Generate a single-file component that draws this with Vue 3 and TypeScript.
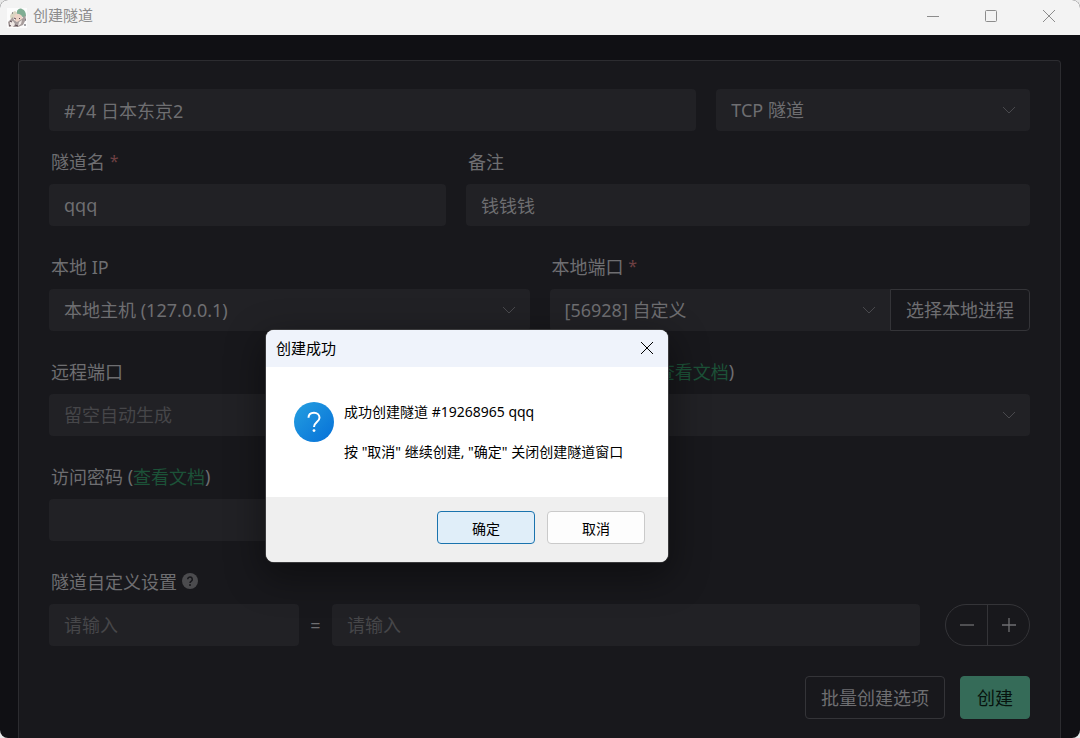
<script setup lang="ts">
import { ref } from 'vue'

const node = ref('#74 日本东京2')
const tunnelName = ref('qqq')
const note = ref('钱钱钱')
const remotePort = ref('')
const password = ref('')
const settingKey = ref('')
const settingValue = ref('')
const dialogOpen = ref(true)
</script>

<template>
  <div class="window">
    <header class="titlebar">
      <svg class="app-icon" viewBox="0 0 20 20" aria-hidden="true">
        <rect width="20" height="20" fill="#fcfcfc" />
        <path d="M3 8C4 5 6 4 8 3l3 2-3 4-4 3z" fill="#d9d5c2" />
        <path d="M10 3c1-2 3-3 5-2 3 1 4 4 4 7l-2 2-3-2-4-1z" fill="#7fae93" />
        <path d="M7 8c2-3 5-3 8 0l1 4-4 3-4-2z" fill="#ecd3c6" />
        <path d="M1 14l5-5 1 3 3 2 5-3 3-4 1 4-3 6-5 2H2z" fill="#a79d9c" />
        <path d="M3 14l3-1 2 3-2 3H3zM12 14l3-2-1 4-3 2z" fill="#efe8e4" />
        <path d="M7 10l2 1M12 10l1 1M3 13l2 1M2 17l2 1M8 17l3 1" stroke="#5b4a52" fill="none" />
        <path d="M17 17h2M5 5h1M18 12h1" stroke="#4c4c54" fill="none" />
      </svg>
      <span class="title">创建隧道</span>
      <div class="controls">
        <button type="button" aria-label="最小化">
          <svg viewBox="0 0 14 14"><path d="M1 7.5h12" /></svg>
        </button>
        <button type="button" aria-label="最大化">
          <svg viewBox="0 0 14 14"><rect x="1.5" y="1.5" width="11" height="11" rx="1" /></svg>
        </button>
        <button type="button" aria-label="关闭">
          <svg viewBox="0 0 14 14"><path d="M1 1l12 12M13 1L1 13" /></svg>
        </button>
      </div>
    </header>

    <main class="page">
      <form class="card" @submit.prevent>
        <div class="row first">
          <input v-model="node" class="field span-16" aria-label="节点" />
          <div class="select span-8">
            <select class="field" aria-label="隧道类型"><option>TCP 隧道</option></select>
            <svg class="chevron" viewBox="0 0 14 14"><path d="M1 4l6 6 6-6" /></svg>
          </div>
        </div>

        <div class="row">
          <div class="item span-10">
            <label for="name">隧道名 <span class="required">*</span></label>
            <input id="name" v-model="tunnelName" class="field" />
          </div>
          <div class="item span-14">
            <label for="note">备注</label>
            <input id="note" v-model="note" class="field" />
          </div>
        </div>

        <div class="row">
          <div class="item span-12">
            <label for="ip">本地 IP</label>
            <div class="select">
              <select id="ip" class="field"><option>本地主机 (127.0.0.1)</option></select>
              <svg class="chevron" viewBox="0 0 14 14"><path d="M1 4l6 6 6-6" /></svg>
            </div>
          </div>
          <div class="item span-12">
            <label for="port">本地端口 <span class="required">*</span></label>
            <div class="group">
              <div class="select">
                <select id="port" class="field"><option>[56928] 自定义</option></select>
                <svg class="chevron" viewBox="0 0 14 14"><path d="M1 4l6 6 6-6" /></svg>
              </div>
              <button type="button" class="btn pick">选择本地进程</button>
            </div>
          </div>
        </div>

        <div class="row">
          <div class="item span-12">
            <label for="remote">远程端口</label>
            <input id="remote" v-model="remotePort" class="field" placeholder="留空自动生成" />
          </div>
          <div class="item span-12">
            <div class="label"><label for="https">自动 HTTPS</label> (<a href="#">查看文档</a>)</div>
            <div class="select">
              <select id="https" class="field"><option>禁用</option></select>
              <svg class="chevron" viewBox="0 0 14 14"><path d="M1 4l6 6 6-6" /></svg>
            </div>
          </div>
        </div>

        <div class="row">
          <div class="item span-12">
            <div class="label"><label for="password">访问密码</label> (<a href="#">查看文档</a>)</div>
            <input id="password" v-model="password" class="field" type="password" />
          </div>
        </div>

        <div class="item custom">
          <label for="key">
            隧道自定义设置
            <svg class="help" viewBox="0 0 16 16" aria-hidden="true">
              <circle cx="8" cy="8" r="8" />
              <path d="M5.7 6.3a2.3 2.3 0 1 1 3.6 1.9C8.4 8.8 8 9 8 10" />
              <circle class="dot" cx="8" cy="12" r="1" />
            </svg>
          </label>
          <div class="pair">
            <input id="key" v-model="settingKey" class="field" placeholder="请输入" />
            <span class="equals">=</span>
            <input v-model="settingValue" class="field" placeholder="请输入" aria-label="设置值" />
            <div class="stepper">
              <button type="button" aria-label="移除">
                <svg viewBox="0 0 16 16"><path d="M1 8h14" /></svg>
              </button>
              <button type="button" aria-label="添加">
                <svg viewBox="0 0 16 16"><path d="M1 8h14M8 1v14" /></svg>
              </button>
            </div>
          </div>
        </div>

        <div class="actions">
          <button type="button" class="btn">批量创建选项</button>
          <button type="submit" class="btn primary">创建</button>
        </div>
      </form>
    </main>

    <section v-if="dialogOpen" class="dialog" role="dialog" aria-labelledby="dialog-title">
      <header class="dialog-head">
        <span id="dialog-title">创建成功</span>
        <button type="button" class="dialog-close" aria-label="关闭" @click="dialogOpen = false">
          <svg viewBox="0 0 14 14"><path d="M1 1l12 12M13 1L1 13" /></svg>
        </button>
      </header>
      <div class="dialog-body">
        <svg class="question" viewBox="0 0 40 40" aria-hidden="true">
          <defs>
            <linearGradient id="blue" x1="0" y1="0" x2="1" y2="1">
              <stop offset="0" stop-color="#259fe0" />
              <stop offset="1" stop-color="#0670d8" />
            </linearGradient>
          </defs>
          <circle cx="20" cy="20" r="20" fill="url(#blue)" />
          <path d="M14.5 15.8c0-3.200 2.300-5 5.500-5s5.500 2 5.500 4.900c0 4.300-5.500 4.600-5.500 9.300" fill="none" stroke="#fff" stroke-width="2" />
          <circle cx="20" cy="28.600" r="1.400" fill="#fff" />
        </svg>
        <div class="message">
          <p>成功创建隧道 #19268965 qqq</p>
          <p>按 "取消" 继续创建, "确定" 关闭创建隧道窗口</p>
        </div>
      </div>
      <footer class="dialog-foot">
        <button type="button" class="ok" @click="dialogOpen = false">确定</button>
        <button type="button" @click="dialogOpen = false">取消</button>
      </footer>
    </section>
  </div>
</template>

<style>
body {
  margin: 0;
  background: #e8e8e8;
}
</style>

<style scoped>
* {
  box-sizing: border-box;
}
.window {
  position: relative;
  display: flex;
  flex-direction: column;
  min-height: 100vh;
  overflow: hidden;
  border-radius: 8px;
  background: #101014;
  color: #6e6e71;
  font-family: "Noto Sans", "Noto Sans CJK SC", sans-serif;
  font-size: 18px;
}
button,
input,
select {
  margin: 0;
  font: inherit;
  color: inherit;
}
svg {
  display: block;
  fill: none;
  stroke: currentColor;
}
.titlebar {
  display: flex;
  align-items: center;
  height: 35px;
  padding-left: 7px;
  background: #f3f3f3;
  color: #8c8c8c;
  font-size: 15px;
}
.app-icon {
  width: 20px;
  height: 20px;
  margin-right: 6px;
  stroke: none;
}
.title {
  line-height: 30px;
  padding-bottom: 6px;
}
.controls {
  display: flex;
  height: 32px;
  margin: 0 2px auto auto;
}
.controls button {
  display: grid;
  place-items: center;
  width: 58px;
  padding: 0;
  border: 0;
  background: none;
}
.controls svg {
  width: 14px;
  height: 14px;
}
.page {
  display: flex;
  flex: 1;
  padding: 25px 19px 0 18px;
}
.card {
  flex: 1;
  padding: 28px 30px 19px;
  border: 1px solid #2c2c30;
  border-bottom: 0;
  border-radius: 4px 4px 0 0;
  background: #18181c;
}
.row {
  display: grid;
  grid-template-columns: repeat(24, minmax(0, 1fr));
  column-gap: 20px;
  margin-bottom: 27px;
}
.row.first {
  margin-bottom: 17px;
}
.span-8 { grid-column: span 8; }
.span-10 { grid-column: span 10; }
.span-12 { grid-column: span 12; }
.span-14 { grid-column: span 14; }
.span-16 { grid-column: span 16; }
.item > label,
.label {
  display: flex;
  align-items: center;
  height: 26px;
  margin-bottom: 10px;
  padding-left: 2px;
  white-space: pre;
}
.required {
  color: #6e4043;
  font-size: 16px;
}
a {
  color: #1c5238;
  text-decoration: none;
}
.field {
  display: block;
  width: 100%;
  min-width: 0;
  height: 42px;
  padding: 0 15px;
  border: 0;
  border-radius: 4px;
  outline: 0;
  background: #212125;
  appearance: none;
}
.field.span-16 {
  width: auto;
}
.field::placeholder {
  color: #464649;
  opacity: 1;
}
.select {
  position: relative;
  min-width: 0;
}
.chevron {
  position: absolute;
  top: 14px;
  right: 14px;
  width: 14px;
  height: 14px;
  color: #49494d;
  pointer-events: none;
}
.group {
  display: flex;
}
.group .select {
  flex: 1;
}
.group .field {
  border-radius: 4px 0 0 4px;
}
.btn {
  height: 43px;
  padding: 0 15px;
  border: 1px solid #343438;
  border-radius: 4px;
  background: none;
  line-height: 38px;
  white-space: nowrap;
}
.btn.pick {
  height: 42px;
  border-radius: 0 4px 4px 0;
}
.help {
  width: 16px;
  height: 16px;
  margin-left: 5px;
  fill: #4b4b4e;
  stroke: none;
}
.help path {
  fill: none;
  stroke: #18181c;
  stroke-width: 1.5;
}
.help .dot {
  fill: #18181c;
}
.item.custom > label {
  white-space: normal;
}
.pair {
  display: grid;
  grid-template-columns: 250fr 33px 588fr 110px;
  align-items: center;
}
.equals {
  text-align: center;
}
.stepper {
  display: flex;
  height: 42px;
  margin-left: 25px;
  border: 1px solid #343438;
  border-radius: 21px;
}
.stepper button {
  display: grid;
  flex: 1;
  place-items: center;
  padding: 0;
  border: 0;
  background: none;
}
.stepper button + button {
  border-left: 1px solid #343438;
}
.stepper svg {
  width: 16px;
  height: 16px;
  stroke-width: 1.3;
}
.actions {
  display: flex;
  justify-content: flex-end;
  gap: 15px;
  margin-top: 30px;
}
.btn.primary {
  border-color: #356b58;
  background: #356b58;
  color: #07130e;
  padding: 0 16px;
}
.dialog {
  position: absolute;
  top: 330px;
  left: 266px;
  width: 402px;
  overflow: hidden;
  border-radius: 8px;
  background: #fff;
  box-shadow: 0 0 0 1px #3a3a3c, 0 12px 36px 4px rgba(0, 0, 0, 0.4);
  color: #000;
  font-size: 14px;
}
.dialog-head {
  display: flex;
  align-items: center;
  justify-content: space-between;
  height: 37px;
  padding: 0 14px 2px 10px;
  background: #eff3fb;
  font-size: 15px;
}
.dialog-close {
  padding: 0;
  border: 0;
  background: none;
}
.dialog-close svg {
  width: 14px;
  height: 14px;
}
.dialog-body {
  display: flex;
  gap: 10px;
  padding: 35px 28px;
}
.question {
  width: 40px;
  height: 40px;
  stroke: none;
}
.message p {
  margin: 0 0 20px;
  line-height: 20px;
  white-space: nowrap;
}
.message p:last-child {
  margin-bottom: 0;
}
.dialog-foot {
  display: flex;
  justify-content: flex-end;
  gap: 12px;
  padding: 14px 23px 18px;
  background: #efefef;
}
.dialog-foot button {
  width: 98px;
  height: 33px;
  padding: 0;
  border: 1px solid #cacaca;
  border-radius: 4px;
  background: #fdfdfd;
}
.dialog-foot .ok {
  border-color: #1a73ae;
  background: #e0eef9;
}
</style>
